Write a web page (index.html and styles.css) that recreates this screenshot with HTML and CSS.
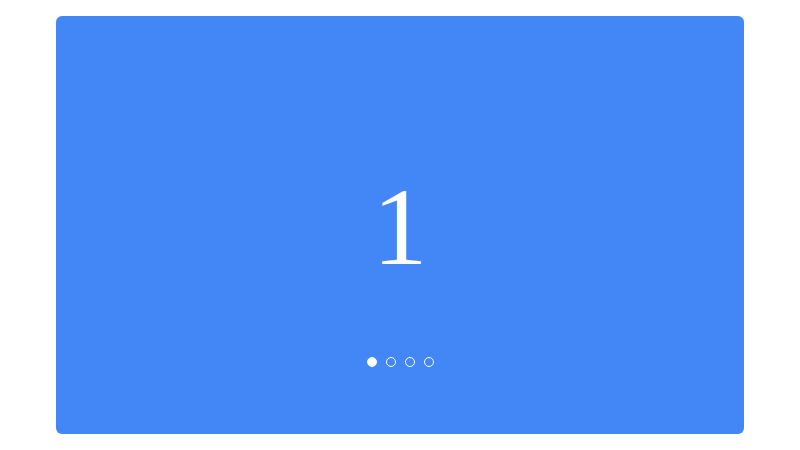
FILE: index.html
```html
<!DOCTYPE html>
<html>
<head>
<meta charset="utf-8">
<link rel="stylesheet" href="styles.css">
</head>
<body>
<div class="page">
  <div class="carousel">
    <div class="slide"><span class="num">1</span></div>
    <div class="dots">
      <span class="dot active"></span>
      <span class="dot"></span>
      <span class="dot"></span>
      <span class="dot"></span>
    </div>
  </div>
</div>
</body>
</html>
```
FILE: styles.css
```css
html, body { margin: 0; padding: 0; background: #fff; }
.page { padding: 16px 56px; }
.carousel {
  position: relative;
  height: 418px;
  background: #4287f5;
  border-radius: 6px;
  overflow: hidden;
}
.slide {
  height: 100%;
  display: flex;
  align-items: center;
  justify-content: center;
}
.num {
  font-family: "Liberation Serif", "Times New Roman", serif;
  font-size: 110px;
  line-height: 1;
  color: #fff;
  padding-top: 4px;
}
.dots {
  position: absolute;
  left: 0; right: 0;
  bottom: 67px;
  display: flex;
  justify-content: center;
  gap: 9px;
}
.dot {
  width: 10px;
  height: 10px;
  box-sizing: border-box;
  border: 1.5px solid #fff;
  border-radius: 50%;
}
.dot.active { background: #fff; }
```
